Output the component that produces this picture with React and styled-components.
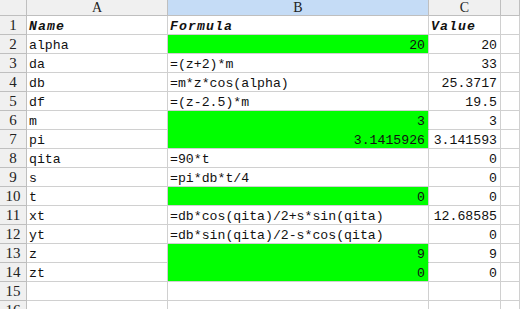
import React from "react";
import styled, { createGlobalStyle, css } from "styled-components";

const Global = createGlobalStyle`
  html, body { margin: 0; padding: 0; background: #ffffff; overflow: hidden; }
  body { width: 520px; height: 309px; }
`;

const GRID = "#d0d0d0";
const HEAD_LINE = "#bfbfbf";
const GREEN = "#00ff00";

const Sheet = styled.div`
  display: grid;
  grid-template-columns: 27px 141px 261px 72px 1fr;
  grid-template-rows: 16px;
  grid-auto-rows: 19px;
  width: 520px;
  height: 309px;
  overflow: hidden;
  background: #ffffff;
`;

const HeadBase = styled.div`
  box-sizing: border-box;
  background: ${(p) => (p.$active ? "#c5dcf6" : "#f0f0f0")};
  border-right: 1px solid ${HEAD_LINE};
  border-bottom: 1px solid ${HEAD_LINE};
  font-family: "Liberation Serif", "Times New Roman", serif;
  color: #222;
  display: flex;
  justify-content: center;
`;

const Corner = styled(HeadBase)``;

const ColHeader = styled(HeadBase)`
  align-items: center;
  font-size: 14px;
  line-height: 15px;
`;

const RowHeader = styled(HeadBase)`
  align-items: flex-end;
  font-size: 15px;
  line-height: 16px;
  padding-bottom: 1px;
`;

const Cell = styled.div`
  box-sizing: border-box;
  border-right: 1px solid ${GRID};
  border-bottom: 1px solid ${(p) => (p.$fill && p.$joinBelow ? p.$fill : GRID)};
  background: ${(p) => p.$fill || "#ffffff"};
  display: flex;
  align-items: flex-end;
  justify-content: ${(p) => (p.$right ? "flex-end" : "flex-start")};
  padding: 0 3px 0 2px;
  font-family: "Liberation Mono", "Courier New", monospace;
  font-size: 13.2px;
  line-height: 14px;
  color: #111;
  white-space: nowrap;
  overflow: hidden;
  ${(p) =>
    p.$title &&
    css`
      font-weight: bold;
      font-style: italic;
      letter-spacing: 1.1px;
    `}
`;

const rows = [
  { a: "Name", b: "Formula", c: "Value", title: true },
  { a: "alpha", b: "20", c: "20", green: true },
  { a: "da", b: "=(z+2)*m", c: "33" },
  { a: "db", b: "=m*z*cos(alpha)", c: "25.3717" },
  { a: "df", b: "=(z-2.5)*m", c: "19.5" },
  { a: "m", b: "3", c: "3", green: true },
  { a: "pi", b: "3.1415926", c: "3.141593", green: true },
  { a: "qita", b: "=90*t", c: "0" },
  { a: "s", b: "=pi*db*t/4", c: "0" },
  { a: "t", b: "0", c: "0", green: true },
  { a: "xt", b: "=db*cos(qita)/2+s*sin(qita)", c: "12.68585" },
  { a: "yt", b: "=db*sin(qita)/2-s*cos(qita)", c: "0" },
  { a: "z", b: "9", c: "9", green: true },
  { a: "zt", b: "0", c: "0", green: true },
  { a: "", b: "", c: "" },
  { a: "", b: "", c: "" },
];

export default function App() {
  return (
    <>
      <Global />
      <Sheet>
        <Corner />
        <ColHeader>A</ColHeader>
        <ColHeader $active>B</ColHeader>
        <ColHeader>C</ColHeader>
        <ColHeader />
        {rows.map((r, i) => {
          const next = rows[i + 1];
          return (
            <React.Fragment key={i}>
              <RowHeader>{i + 1}</RowHeader>
              <Cell $title={r.title}>{r.a}</Cell>
              <Cell
                $title={r.title}
                $fill={r.green ? GREEN : undefined}
                $joinBelow={r.green && next && next.green}
                $right={r.green}
              >
                {r.b}
              </Cell>
              <Cell $title={r.title} $right={!r.title}>
                {r.c}
              </Cell>
              <Cell />
            </React.Fragment>
          );
        })}
      </Sheet>
    </>
  );
}
